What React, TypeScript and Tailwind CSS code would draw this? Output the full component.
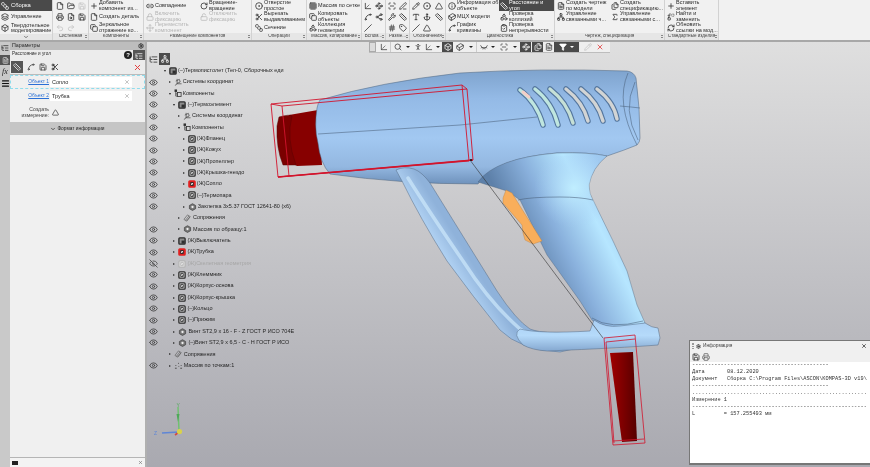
import React from "react";
import {
  File, FolderOpen, Save, Printer, FileSearch, Undo2, Redo2, Eye, EyeOff, Search, Box, Filter, Pencil, X,
  Settings, Menu, Grid3x3, Copy, Layers, Link2, Lock, LockOpen, Move, RotateCw, CircleDot, Scissors, SquareStack,
  Ruler, Info, Cuboid, Spline, Shapes, ClipboardCheck, Waypoints, Sigma, FileText, Files, Replace, RefreshCw, Plus,
  ChevronDown, ListTree, Network, Axis3d, PersonStanding, EyeClosed, ScanLine, Share2, Wrench, PenLine, Anchor, Type, Hash, Triangle, Slash, Tag,
} from "lucide-react";

type LI = React.ComponentType<{ size?: number; strokeWidth?: number; className?: string; color?: string }>;

const I = ({ i: Icon, s = 8, c = "#333", w = 2.4 }: { i: LI; s?: number; c?: string; w?: number }) => (
  <span className="flex shrink-0 items-center justify-center">
    <Icon size={s} strokeWidth={w} color={c} />
  </span>
);

const Row = ({ i, t, c, dim, dark, iconW = "w-[9px]" }: { i?: LI; t: string; c?: string; dim?: boolean; dark?: boolean; iconW?: string }) => (
  <div className={`flex h-[11px] items-center gap-[1px] ${dark ? "bg-[#4a4a4a] text-white" : dim ? "text-[#b4b4b4]" : "text-[#2a2a2a]"}`}>
    <span className={`flex justify-center shrink-0 ${iconW}`}>
      {i && <I i={i} c={dark ? "#fff" : dim ? "#bdbdbd" : c || "#333"} />}
    </span>
    <span className="whitespace-pre text-[5.5px] leading-[5.2px]">{t}</span>
  </div>
);

const Group = ({ w, label, children }: { w: string; label: string; children: React.ReactNode }) => (
  <div className={`flex h-full shrink-0 flex-col border-r border-[#d2d2d2] ${w}`}>
    <div className="flex h-[34px] overflow-hidden">{children}</div>
    <div className="relative flex h-[7px] items-center justify-center bg-[#e6e6e6] text-[4.6px] leading-none text-[#444]">
      <span className="truncate">{label}</span>
      <span className="absolute right-[1px] top-[2px] h-[3px] w-[1px] border-x border-dotted border-[#888]" />
    </div>
  </div>
);

const IconGrid = ({ cols, w, items, dim = [] }: { cols: number; w: string; items: (LI | null)[]; dim?: number[] }) => (
  <div className={`grid auto-rows-[11px] items-center justify-items-center ${w}`} style={{ gridTemplateColumns: `repeat(${cols}, 1fr)` }}>
    {items.map((Ic, k) => (
      <span key={k}>{Ic && <I i={Ic} c={dim.includes(k) ? "#c4c4c4" : "#333"} />}</span>
    ))}
  </div>
);

const Ribbon = () => (
  <div className="flex h-[42px] shrink-0 border-b-2 border-[#a8a8a8] bg-[#f1f1f1]">
    <div className="flex h-full w-[53px] shrink-0 flex-col border-r border-[#d2d2d2]">
      <div className="flex h-[11px] items-center gap-[2px] bg-[#4a4a4a] pl-[1px] text-white">
        <I i={SquareStack} c="#fff" /><span className="text-[5.8px] leading-none">Сборка</span>
      </div>
      <div className="flex h-[11px] items-center gap-[2px] pl-[1px] text-[#2a2a2a]">
        <I i={Layers} /><span className="text-[5.5px] leading-none">Управление</span>
      </div>
      <div className="flex h-[12px] items-center gap-[2px] pl-[1px] text-[#2a2a2a]">
        <I i={Box} /><span className="whitespace-pre text-[5.5px] leading-[5.2px]">{"Твердотельное\nмоделирование"}</span>
      </div>
      <div className="flex flex-1 items-center justify-center bg-[#e6e6e6]"><ChevronDown size={6} color="#555" strokeWidth={3} /></div>
    </div>
    <Group w="w-[36px]" label="Системная">
      <div className="pl-[1px]">
        <IconGrid cols={3} w="w-[33px]" items={[File, FolderOpen, Save, Printer, FileSearch, Save, Undo2, Redo2, null]} dim={[2, 6, 7]} />
      </div>
    </Group>
    <Group w="w-[55px]" label="Компоненты">
      <div>
        <Row i={Plus} t={"Добавить\nкомпонент из..."} />
        <Row i={File} t="Создать деталь" />
        <Row i={Copy} t={"Зеркальное\nотражение ко..."} />
      </div>
    </Group>
    <Group w="w-[108px]" label="Размещение компонентов">
      <div className="w-[55px] pl-[1px]">
        <Row i={Link2} t="Совпадение" />
        <Row i={Lock} t={"Включить\nфиксацию"} dim />
        <Row i={Move} t={"Переместить\nкомпонент"} dim />
      </div>
      <div>
        <Row i={RotateCw} t={"Вращение-\nвращение"} />
        <Row i={LockOpen} t={"Отключить\nфиксацию"} dim />
      </div>
    </Group>
    <Group w="w-[55px]" label="Операции">
      <div className="pl-[2px]">
        <Row i={CircleDot} t={"Отверстие\nпростое"} />
        <Row i={Scissors} t={"Вырезать\nвыдавливанием"} />
        <Row i={SquareStack} t="Сечение" />
      </div>
    </Group>
    <Group w="w-[55px]" label="Массив, копирование">
      <div className="pl-[1px]">
        <Row i={Grid3x3} t="Массив по сетке" />
        <Row i={Copy} t={"Копировать\nобъекты"} />
        <Row i={Shapes} t={"Коллекция\nгеометрии"} />
      </div>
    </Group>
    <Group w="w-[24px]" label="Вспом...">
      <IconGrid cols={2} w="w-[24px]" items={[Axis3d, Waypoints, Spline, Share2, Slash, null]} />
    </Group>
    <Group w="w-[24px]" label="Разме...">
      <IconGrid cols={2} w="w-[24px]" items={[ScanLine, PenLine, Wrench, Ruler, Hash, Tag]} />
    </Group>
    <Group w="w-[36px]" label="Обозначения">
      <IconGrid cols={3} w="w-[36px]" items={[Pencil, CircleDot, Triangle, Type, Anchor, Ruler, Slash, Triangle, null]} />
    </Group>
    <Group w="w-[109px]" label="Диагностика">
      <div className="w-[53px] pl-[1px]">
        <Row i={Info} t={"Информация об\nобъекте"} />
        <Row i={Cuboid} t="МЦХ модели" />
        <Row i={Spline} t={"График\nкривизны"} />
      </div>
      <div className="w-[55px]">
        <Row i={Ruler} t={"Расстояние и\nугол"} dark />
        <Row i={Shapes} t={"Проверка\nколлизий"} />
        <Row i={ClipboardCheck} t={"Проверка\nнепрерывности"} />
      </div>
    </Group>
    <Group w="w-[110px]" label="Чертеж, спецификация">
      <div className="w-[55px] pl-[1px]">
        <Row i={FileText} t={"Создать чертеж\nпо модели"} />
        <Row i={Network} t={"Управление\nсвязанными ч..."} />
      </div>
      <div>
        <Row i={Files} t={"Создать\nспецификацию..."} />
        <Row i={Sigma} t={"Управление\nсвязанными с..."} />
      </div>
    </Group>
    <Group w="w-[54px]" label="Стандартные изделия">
      <div className="pl-[1px]">
        <Row i={Plus} t={"Вставить\nэлемент"} />
        <Row i={Replace} t={"Найти и\nзаменить"} />
        <Row i={RefreshCw} t={"Обновить\nссылки на мод..."} />
      </div>
    </Group>
  </div>
);

const Strip = () => (
  <div className="flex w-[10px] shrink-0 flex-col items-center gap-[3px] bg-[#c9c9c9] pt-[1px]">
    <span className="mt-[1px]"><I i={ListTree} s={8} /></span>
    <span className="flex h-[10px] w-[10px] items-center justify-center bg-[#555]"><I i={FileText} s={7} c="#ddd" /></span>
    <span className="font-['Liberation_Serif',serif] text-[8px] italic leading-[8px] text-[#222]">fx</span>
    <Menu size={9} strokeWidth={3} color="#111" />
  </div>
);

const ObjRow = ({ n, t, active }: { n: string; t: string; active?: boolean }) => (
  <div className={`flex h-[14px] items-center border border-dashed ${active ? "border-[#8fdcec]" : "border-transparent"}`}>
    <span className="w-[38px] text-right text-[4.9px] leading-none text-[#2a6fd6] underline">{n}</span>
    <div className="ml-[1px] flex h-[10px] w-[82px] items-center justify-between bg-white pl-[2px] pr-[2px] text-[5.5px] text-[#2a2a2a]">
      <span>{t}</span><X size={6} strokeWidth={2} color="#888" />
    </div>
  </div>
);

const Panel = () => (
  <div className="flex w-[137px] shrink-0 flex-col border-r-2 border-[#b0b0b0] bg-[#f0f0f0] text-[#2a2a2a]">
    <div className="flex h-[8px] items-center justify-between bg-[#bdbdbd] pl-[2px] pr-[1px]">
      <span className="text-[5.3px] leading-none">Параметры</span>
      <Settings size={6} strokeWidth={3} color="#222" />
    </div>
    <div className="flex h-[10px] items-start justify-between bg-[#ececec] pl-[2px]">
      <span className="mt-[2px] text-[4.6px] leading-none">Расстояние и угол</span>
      <div className="flex items-start gap-[1px]">
        <span className="mt-[1px] flex h-[8px] w-[8px] items-center justify-center rounded-full bg-[#222] text-[6px] font-bold leading-none text-white">?</span>
        <span className="flex h-[11px] w-[12px] items-center justify-center bg-[#555]"><I i={ListTree} s={8} c="#eee" /></span>
      </div>
    </div>
    <div className="flex h-[15px] items-center justify-between border-b border-[#bbb] bg-[#ececec] pl-[1px] pr-[3px]">
      <div className="flex items-center gap-[4px]">
        <span className="flex h-[12px] w-[12px] items-center justify-center bg-[#555]"><I i={Ruler} s={8} c="#eee" /></span>
        <I i={Spline} s={8} c="#444" /><I i={Save} s={8} c="#444" /><I i={Scissors} s={8} c="#222" />
      </div>
      <X size={9} strokeWidth={2.6} color="#e23b3b" />
    </div>
    <ObjRow n="Объект 1" t="Сопло" active />
    <ObjRow n="Объект 2" t="Трубка" />
    <div className="flex h-[19px] items-center">
      <span className="w-[39px] whitespace-pre-line text-right text-[5.2px] leading-[5.5px] text-[#444]">{"Создать\nизмерение:"}</span>
      <span className="ml-[3px]"><I i={Triangle} s={7} c="#333" /></span>
    </div>
    <div className="flex h-[13px] items-center justify-center gap-[1px] bg-[#c5c5c5] pt-[1px]">
      <ChevronDown size={6} strokeWidth={3} color="#333" />
      <span className="text-[4.8px] leading-none text-[#222]">Формат информации</span>
    </div>
    <div className="flex-1" />
    <div className="flex h-[10px] items-center justify-between border-t border-[#b5b5b5] bg-[#f3f3f3] pl-[2px] pr-[2px]">
      <span className="h-[4px] w-[6px] bg-[#222]" />
      <X size={5} strokeWidth={3} color="#777" />
    </div>
  </div>
);

type Node = { e: number; d: number; a: "d" | "r"; k: string; t: string };
const nodes: Node[] = [
  { e: 0, d: 0, a: "d", k: "asm", t: "(–)Термопистолет (Тел-0, Сборочных еди" },
  { e: 1, d: 1, a: "r", k: "cs", t: "Системы координат" },
  { e: 1, d: 1, a: "d", k: "cp", t: "Компоненты" },
  { e: 1, d: 2, a: "d", k: "asm", t: "(–)Термоэлемент" },
  { e: 1, d: 3, a: "r", k: "cs", t: "Системы координат" },
  { e: 1, d: 3, a: "d", k: "cp", t: "Компоненты" },
  { e: 1, d: 4, a: "r", k: "part", t: "(Ж)Фланец" },
  { e: 1, d: 4, a: "r", k: "part", t: "(Ж)Кожух" },
  { e: 1, d: 4, a: "r", k: "part", t: "(Ж)Пропеллер" },
  { e: 1, d: 4, a: "r", k: "part", t: "(Ж)Крышка-гнездо" },
  { e: 1, d: 4, a: "r", k: "red", t: "(Ж)Сопло" },
  { e: 1, d: 4, a: "r", k: "part", t: "(–)Термопара" },
  { e: 1, d: 4, a: "r", k: "std", t: "Заклепка 3х5.37 ГОСТ 12641-80 (х6)" },
  { e: 0, d: 3, a: "r", k: "mt", t: "Сопряжения" },
  { e: 1, d: 3, a: "r", k: "arr", t: "Массив по образцу:1" },
  { e: 1, d: 2, a: "r", k: "asm", t: "(Ж)Выключатель" },
  { e: 1, d: 2, a: "r", k: "red", t: "(Ж)Трубка" },
  { e: 2, d: 2, a: "r", k: "dim", t: "(Ж)Скелетная геометрия" },
  { e: 1, d: 2, a: "r", k: "part", t: "(Ж)Клеммник" },
  { e: 1, d: 2, a: "r", k: "part", t: "(Ж)Корпус-основа" },
  { e: 1, d: 2, a: "r", k: "part", t: "(Ж)Корпус-крышка" },
  { e: 1, d: 2, a: "r", k: "part", t: "(–)Кольцо" },
  { e: 1, d: 2, a: "r", k: "part", t: "(–)Прижим" },
  { e: 1, d: 2, a: "r", k: "std", t: "Винт ST2,9 x 16 - F - Z ГОСТ Р ИСО 704Е" },
  { e: 1, d: 2, a: "r", k: "std", t: "(–)Винт ST2,9 x 6,5 - C - H ГОСТ Р ИСО" },
  { e: 0, d: 1, a: "r", k: "mt", t: "Сопряжения" },
  { e: 1, d: 1, a: "r", k: "pts", t: "Массив по точкам:1" },
];

const NodeIcon = ({ k }: { k: string }) => {
  const dark = "#2a2a2a";
  if (k === "part" || k === "red" || k === "dim" || k === "asm") {
    const st = k === "dim" ? "#b5b5b5" : dark;
    const fill = k === "red" ? "#e02020" : k === "asm" ? "#8c8c8c" : "#e8e8e8";
    return (
      <svg width="8" height="8" viewBox="0 0 9 9" className="shrink-0">
        <rect x="1" y="1" width="7" height="7" rx="1" fill={fill} stroke={k === "red" ? "#e02020" : st} strokeWidth="1.5" />
        {k === "asm" && <rect x="4" y="4" width="3.5" height="3.5" fill="#2f2f2f" />}
        {k !== "asm" && <path d="M3 2.8h3v3.4h-3zM4 4.2l1.2 1" fill={k === "red" ? "#fff" : "none"} stroke={k === "red" ? "#111" : st} strokeWidth="0.9" />}
      </svg>
    );
  }
  if (k === "cs")
    return (
      <svg width="8" height="8" viewBox="0 0 9 9" className="shrink-0">
        <path d="M3.5 1v5.5h5M3.5 6.5L1 8.5M2 3.5l4-2 1 3-4 1.8" fill="none" stroke="#444" strokeWidth="0.8" />
      </svg>
    );
  if (k === "cp")
    return (
      <svg width="8" height="8" viewBox="0 0 9 9" className="shrink-0">
        <rect x="0.6" y="0.5" width="2.8" height="2.8" fill="#333" />
        <path d="M2 3v5h2M2 5.5h2" fill="none" stroke="#333" strokeWidth="0.8" />
        <rect x="4" y="4" width="4" height="4.5" fill="none" stroke="#333" strokeWidth="0.9" />
      </svg>
    );
  if (k === "mt")
    return (
      <svg width="9" height="8" viewBox="0 0 10 9" className="shrink-0">
        <path d="M1 6l4-5 3 2-4 5zM2.6 7.2l4-5M4 8l4-5" fill="none" stroke="#666" strokeWidth="0.8" />
      </svg>
    );
  if (k === "pts")
    return (
      <svg width="9" height="8" viewBox="0 0 10 9" className="shrink-0">
        <path d="M1 7h2M7 7h2M5 1v1M2 3.5v1M8 3.5v1M5 5h.8" fill="none" stroke="#444" strokeWidth="1" />
      </svg>
    );
  return (
    <svg width="9" height="8" viewBox="0 0 10 9" className="shrink-0">
      <path d="M5 0.8l3.5 2v3.6L5 8.4 1.5 6.4V2.8z" fill="#777" stroke="#333" strokeWidth="0.7" />
      <circle cx="5" cy="4.5" r="1.3" fill="#eee" />
    </svg>
  );
};

const Tree = () => (
  <div className="relative z-10 flex w-[260px] flex-col">
    <div className="mt-[11px] flex h-[12px] items-center gap-[1px] pl-[2px]">
      <I i={ListTree} s={9} c="#444" />
      <span className="flex h-[12px] w-[11px] items-center justify-center bg-[#4c4c4c]"><I i={Network} s={8} c="#eee" /></span>
    </div>
    {nodes.map((n, i) => (
      <div key={i} className="flex h-[11.35px] items-center text-[5.5px] leading-none">
        <span className="flex w-[12px] shrink-0 justify-center">
          {n.e === 1 && <Eye size={9} strokeWidth={2.2} color="#3f3f3f" />}
          {n.e === 2 && <EyeOff size={9} strokeWidth={2.2} color="#4a4a4a" />}
        </span>
        <span className="shrink-0" style={{ width: 5 + n.d * 4.7 }} />
        <span className="w-[3px] shrink-0">
          {n.a === "d" ? (
            <span className="mt-[1px] block h-0 w-0 border-x-[1.5px] border-t-[2.5px] border-x-transparent border-t-[#222]" />
          ) : (
            <span className="block h-0 w-0 border-y-[1.5px] border-l-[2.5px] border-y-transparent border-l-[#333]" />
          )}
        </span>
        <span className="ml-[2px] flex items-center gap-[1px]">
          <NodeIcon k={n.k} />
          <span className={`whitespace-pre ${n.k === "dim" ? "text-[#a6a6a6]" : "text-[#262626]"}`}>{n.t}</span>
        </span>
      </div>
    ))}
  </div>
);

const Tool = ({ i, dark, w = "w-[11px]", c }: { i: LI; dark?: boolean; w?: string; c?: string }) => (
  <span className={`flex h-[10px] items-center justify-center ${w} ${dark ? "bg-[#4a4a4a]" : ""}`}>
    <I i={i} s={8} c={c || (dark ? "#f2f2f2" : "#444")} />
  </span>
);
const Caret = () => <span className="mx-[2px] h-0 w-0 border-x-[2px] border-t-[2.5px] border-x-transparent border-t-[#222]" />;

const FloatBar = () => (
  <div className="absolute left-[222px] top-[0px] z-20 flex h-[11px] w-[241px] items-center border-b border-[#bdbdbd] bg-[#efefef]">
    <span className="mr-[2px] h-[10px] w-[7px] border border-[#aaa] bg-[#dcdcdc]" />
    <Tool i={Axis3d} />
    <span className="mx-[1px] h-[10px] w-[1px] bg-[#ccc]" />
    <Tool i={Search} w="w-[12px]" /><Caret />
    <Tool i={PersonStanding} /><Tool i={Axis3d} /><Caret />
    <Tool i={Box} dark /><Tool i={Cuboid} w="w-[14px]" /><Caret />
    <span className="mx-[1px] h-[10px] w-[1px] bg-[#ccc]" />
    <Tool i={EyeClosed} /><Caret /><Tool i={ScanLine} w="w-[14px]" /><Caret />
    <span className="ml-[1px]" /><Tool i={Waypoints} dark /><span className="w-[1px]" /><Tool i={Files} dark /><Tool i={FileText} />
    <span className="flex h-[10px] w-[25px] items-center justify-center gap-[3px] bg-[#4a4a4a]">
      <Filter size={8} color="#fff" fill="#fff" />
      <span className="h-0 w-0 border-x-[2px] border-t-[2.5px] border-x-transparent border-t-white" />
    </span>
    <span className="ml-[3px]"><Tool i={Pencil} c="#c8c8c8" /></span>
    <span className="ml-[1px]"><Tool i={X} c="#e23b3b" /></span>
  </div>
);

const InfoWin = () => (
  <div className="absolute right-0 top-[298px] z-20 flex h-[125px] w-[181px] flex-col border-b-2 border-l border-t border-[#777] bg-[#f0f0f0]">
    <div className="flex h-[10px] items-center gap-[2px] pl-[2px] pr-[3px]">
      <span className="h-[6px] w-[2px] border-x border-dotted border-[#999]" />
      <Settings size={5} strokeWidth={3} color="#222" />
      <span className="flex-1 text-[4.8px] leading-none text-[#444]">Информация</span>
      <X size={6} strokeWidth={3} color="#333" />
    </div>
    <div className="flex h-[11px] items-center gap-[2px] pl-[2px]">
      <I i={Save} s={8} c="#333" /><I i={Printer} s={8} c="#666" />
    </div>
    <pre className="flex-1 overflow-hidden bg-white pl-[2px] pt-[0px] font-['Liberation_Mono',monospace] text-[5.3px] leading-[7px] text-[#333]">
{`-------------------------------------------
Дата       08.12.2020
Документ   Сборка C:\\Program Files\\ASCON\\KOMPAS-3D v19\\
-------------------------------------------
.......................................................
Измерение 1
-------------------------------------------------------
L         = 157.255493 мм`}
    </pre>
  </div>
);

const Gun = () => (
  <svg className="absolute inset-0" width="723" height="423" viewBox="147 44 723 423">
    <defs>
      <linearGradient id="body" x1="0" y1="0" x2="0" y2="1">
        <stop offset="0" stopColor="#7ea3cd" /><stop offset="0.25" stopColor="#94bae6" />
        <stop offset="0.6" stopColor="#a2c8f1" /><stop offset="0.85" stopColor="#93b7e0" /><stop offset="1" stopColor="#6f92bc" />
      </linearGradient>
      <linearGradient id="grip" gradientUnits="userSpaceOnUse" x1="530" y1="262" x2="625" y2="215">
        <stop offset="0" stopColor="#5d80a9" /><stop offset="0.35" stopColor="#89b0dc" />
        <stop offset="0.72" stopColor="#b6e6ff" /><stop offset="1" stopColor="#9fc9f0" />
      </linearGradient>
      <radialGradient id="hl" gradientUnits="userSpaceOnUse" cx="574" cy="190" r="40">
        <stop offset="0" stopColor="#c0eeff" /><stop offset="1" stopColor="#a4cbf2" stopOpacity="0" />
      </radialGradient>
      <linearGradient id="guard" gradientUnits="userSpaceOnUse" x1="420" y1="270" x2="460" y2="245">
        <stop offset="0" stopColor="#8aaad2" /><stop offset="0.5" stopColor="#b5d6f6" /><stop offset="1" stopColor="#8fb2da" />
      </linearGradient>
      <linearGradient id="base" x1="0" y1="0" x2="0" y2="1">
        <stop offset="0" stopColor="#a9cff4" /><stop offset="0.5" stopColor="#b5dafa" /><stop offset="1" stopColor="#85a8d0" />
      </linearGradient>
      <linearGradient id="tube" x1="0" y1="0" x2="1" y2="0">
        <stop offset="0" stopColor="#a00000" /><stop offset="0.5" stopColor="#7c0000" /><stop offset="1" stopColor="#560000" />
      </linearGradient>
    </defs>

    {/* nozzle */}
    <path d="M289 117L318 112L322 167L297 168L288 163Z" fill="#870000" />
    <path d="M279 119Q290 116 292 118Q286 140 296 167L283 167Q276 150 277 128Z" fill="#7a0000" stroke="#5a0000" strokeWidth="0.5" />

    {/* body */}
    <path d="M320 102Q380 84 460 75Q540 70 627 73Q634 74 636 80Q640 110 640 140Q640 144 637 147Q625 152 607 158Q590 154 557 155Q495 160 478 186Q400 186 330 176Q320 165 318 145Q314 130 317 110Q318 105 320 102Z" fill="url(#body)" stroke="#4c627b" strokeWidth="0.5" />

    {/* grip */}
    <path d="M478 184Q495 160 557 155Q590 154 607 158Q592 170 589 187Q589 196 593 202L613 243L627 273L637 307L645 325Q620 334 607 328Q596 326 592 322L580 303L547 257L520 202L507 193Z" fill="url(#grip)" stroke="#4c627b" strokeWidth="0.4" />
    <path d="M500 190Q520 160 560 158Q590 156 604 160Q592 170 589 187Q589 196 593 202L610 238L530 225Z" fill="url(#hl)" />

    {/* guard */}
    <path d="M396 172Q404 168 414 171Q422 174 430 185L497 293Q516 322 530 331Q545 337 590 334L600 345L560 354Q520 352 500 332Q474 300 447 263Q420 220 402 183Z" fill="url(#guard)" stroke="#546b85" strokeWidth="0.5" />
    <path d="M408 180Q430 215 463 263Q490 305 520 331Q530 338 560 342" fill="none" stroke="#cde8fb" strokeWidth="3.5" strokeLinecap="round" strokeOpacity="0.7" />

    {/* base */}
    <path d="M523 347Q512 336 520 331Q540 336 590 333L594 322Q605 330 620 328L645 325Q652 330 658 330L660 340L658 347Q620 350 547 353Q532 352 523 347Z" fill="url(#base)" stroke="#546b85" strokeWidth="0.5" />

    {/* seams */}
    <g fill="none" stroke="#4a6079" strokeWidth="0.55">
      <path d="M318 136L460 127L537 119" />
      <path d="M620 108Q632 109 640 110" />
      <path d="M628 75Q615 105 637 147" />
      <path d="M635 84Q622 112 638 142" />
      <path d="M518 202Q530 199 560 199Q580 199 593 202" />
      <path d="M592 320Q610 332 643 323" />
    </g>

    {/* vents */}
    {[
      [520, 92, 543, 127], [535, 91, 558, 127], [550, 91, 573, 125], [566, 91, 588, 123], [581, 91, 603, 123], [597, 91, 617, 121],
    ].map(([a, b, c, d], i) => {
      const p = `M${a} ${b}Q${a + 17} ${b + 13} ${c} ${d}`;
      return (
        <g key={i} fill="none" strokeLinecap="round">
          <path d={p} stroke="#54769e" strokeWidth="5.5" />
          <path d={p} stroke={i < 2 ? "#bfe6df" : i === 2 ? "#c6e0d6" : "#d2d4d4"} strokeWidth="3.4" />
        </g>
      );
    })}
    <path d="M523 94L529 99" stroke="#f3cfc8" strokeWidth="3" strokeLinecap="round" />

    {/* trigger */}
    <path d="M506 192L512 195L520 208L542 243L533 246L525 242L523 235L522 227L503 205L503 200Z" fill="#f9ae5b" stroke="#b98244" strokeWidth="0.4" />

    {/* measure line */}
    <path d="M470 162L603 340" stroke="#333" strokeWidth="0.6" />

    {/* red bbox on nozzle */}
    <g fill="none" stroke="#d2142c" strokeWidth="0.9">
      <path d="M271 106L462 87L469 163L278 179Z" />
      <path d="M282 108L467 91L473 162L289 178Z" />
      <path d="M271 106L282 108M462 87L467 91M278 179L289 178" />
      <path d="M278 179L473 162" strokeWidth="1.5" />
    </g>
    <circle cx="471" cy="162" r="1" fill="#111" />

    {/* tube */}
    <path d="M608 352Q622 349 636 351L634 354L610 355Z" fill="#9fb8d2" />
    <path d="M610 355L633 354L637 443L622 444Z" fill="url(#tube)" />
    <g fill="none" stroke="#d2142c" strokeWidth="0.8">
      <path d="M604 340L635 337L645 445L613 447Z" />
      <path d="M606 344L635 341M613 443L644 441M606 344L614 445" />
    </g>

    {/* triad */}
    <path d="M179 433L178 409" stroke="#6fc26f" strokeWidth="1.4" />
    <path d="M178 424l-1.5-8h3z" fill="#4fa85a" />
    <path d="M179 434L162 435" stroke="#5f86d6" strokeWidth="1.4" />
    <path d="M175 437L179 434" stroke="#d04848" strokeWidth="1.6" />
    <circle cx="179.5" cy="433.5" r="2.6" fill="#d9d24a" />
    <text x="176.5" y="409" fontSize="5" fill="#4fa85a" fontFamily="Liberation Sans">Y</text>
    <text x="154" y="437" fontSize="5" fill="#5f86d6" fontFamily="Liberation Sans">Z</text>
  </svg>
);

export default function App() {
  return (
    <div className="flex h-[467px] w-[870px] flex-col overflow-hidden bg-[#f0f0f0] font-['Liberation_Sans',sans-serif] blur-[0.25px]">
      <Ribbon />
      <div className="flex min-h-0 flex-1">
        <Strip />
        <Panel />
        <div className="relative flex-1 overflow-hidden bg-gradient-to-b from-[#dfdfdf] to-[#a9a9b0]">
          <Gun />
          <FloatBar />
          <Tree />
          <InfoWin />
        </div>
      </div>
    </div>
  );
}
